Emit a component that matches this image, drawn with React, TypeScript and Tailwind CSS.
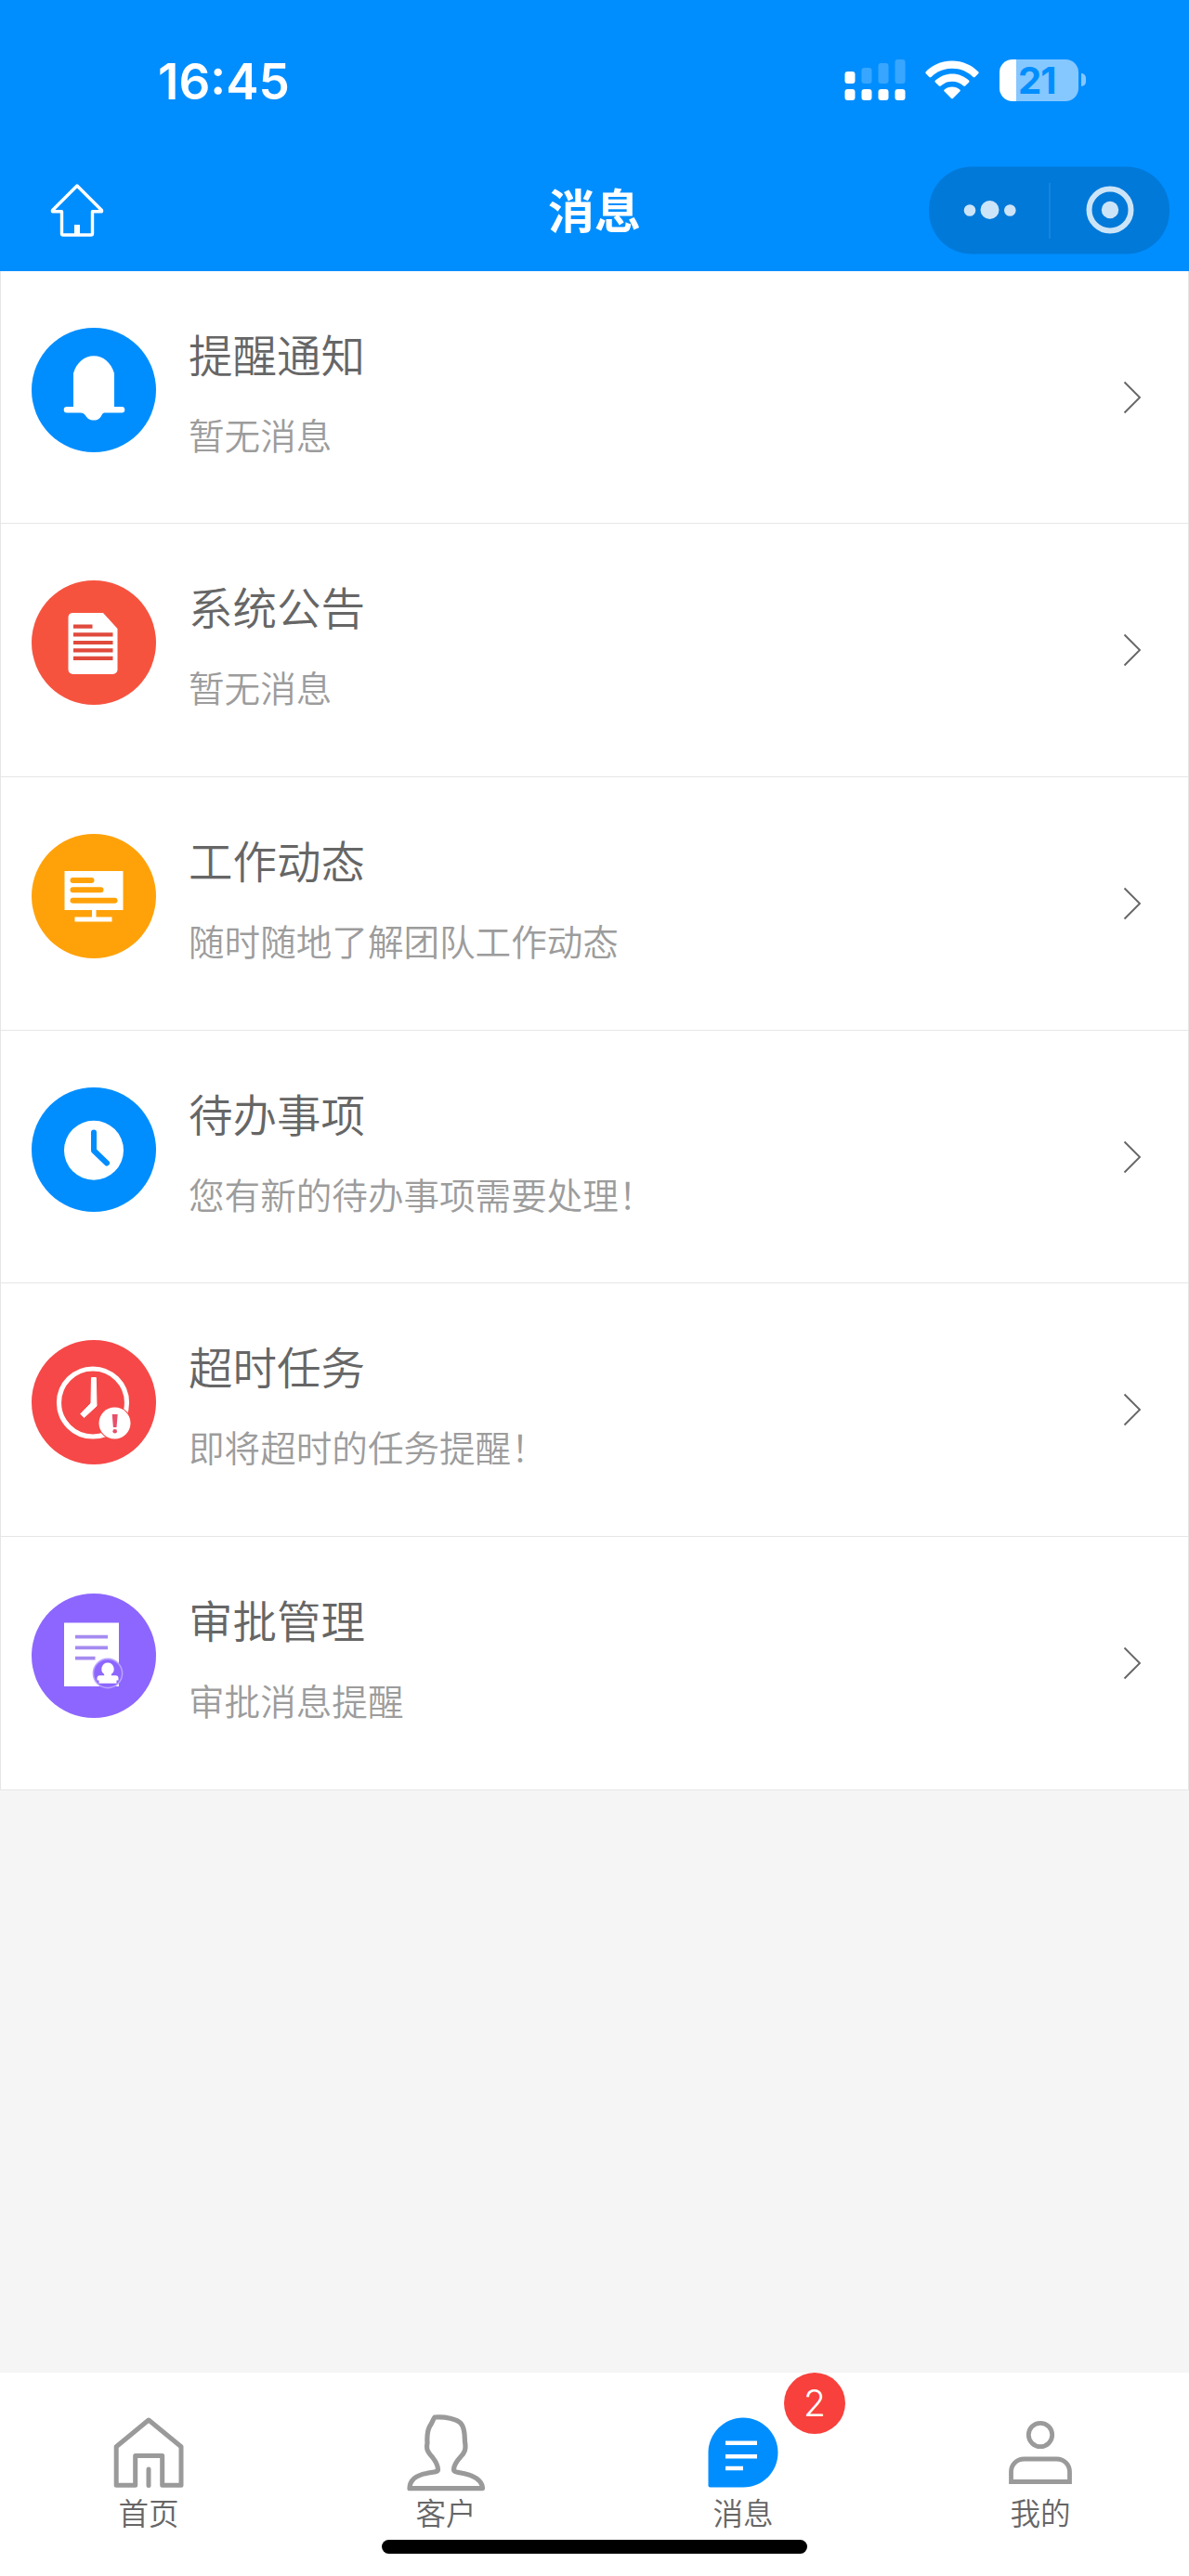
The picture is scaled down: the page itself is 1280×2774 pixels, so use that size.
import type { ReactNode } from 'react';

interface MessageItem {
    title: string;
    summary: string;
    icon: ReactNode;
}

interface TabItem {
    label: string;
    icon: ReactNode;
    badge?: number;
}

const messages: MessageItem[] = [
    { title: '提醒通知', summary: '暂无消息', icon: <BellIcon /> },
    { title: '系统公告', summary: '暂无消息', icon: <NoticeIcon /> },
    { title: '工作动态', summary: '随时随地了解团队工作动态', icon: <BoardIcon /> },
    { title: '待办事项', summary: '您有新的待办事项需要处理！', icon: <ClockIcon /> },
    { title: '超时任务', summary: '即将超时的任务提醒！', icon: <OvertimeIcon /> },
    { title: '审批管理', summary: '审批消息提醒', icon: <ApprovalIcon /> },
];

const tabs: TabItem[] = [
    { label: '首页', icon: <TabHomeIcon /> },
    { label: '客户', icon: <TabCustomerIcon /> },
    { label: '消息', icon: <TabMessageIcon />, badge: 2 },
    { label: '我的', icon: <TabMineIcon /> },
];

export default function App() {
    return (
        <div className="flex h-[2774px] w-[1280px] flex-col overflow-hidden bg-[#f5f5f5] font-['Noto_Sans_CJK_SC',sans-serif]">
            <header className="h-[291.6px] shrink-0 bg-[#008eff] text-white">
                <StatusBar />
                <NavBar />
            </header>
            <main className="flex-1">
                {messages.map((item) => (
                    <MessageRow key={item.title} item={item} />
                ))}
            </main>
            <TabBar />
        </div>
    );
}

function StatusBar() {
    return (
        <div className="flex h-[172px] items-center justify-between pr-[111px] pl-[170px]">
            <span className="pt-[3px] font-['Inter'] text-[53px] leading-[60px] font-semibold">16:45</span>
            <div className="flex items-center">
                <svg className="h-[46px] w-[66px]" viewBox="0 0 66 46" fill="#fff">
                    <rect x="0.5" y="14" width="11" height="13" rx="3" />
                    <rect x="18.5" y="10" width="11" height="17" rx="3" opacity="0.22" />
                    <rect x="36.5" y="5" width="11" height="22" rx="3" opacity="0.22" />
                    <rect x="54.5" y="1" width="11" height="26" rx="3" opacity="0.22" />
                    <rect x="0.5" y="33" width="11" height="12" rx="3" />
                    <rect x="18.5" y="33" width="11" height="12" rx="3" />
                    <rect x="36.5" y="33" width="11" height="12" rx="3" />
                    <rect x="54.5" y="33" width="11" height="12" rx="3" />
                </svg>
                <svg className="ml-[21px] h-[42px] w-[58px]" viewBox="0 0 58 42" fill="#fff">
                    <path d="M29 0.5C18 0.5 8 5 0.8 12.2c-.7.7-.7 1.4 0 2.1l3.6 3.6c.6.6 1.4.6 2 0C12.4 12 20.2 8.8 29 8.8s16.6 3.2 22.6 9.1c.6.6 1.4.6 2 0l3.6-3.6c.7-.7.7-1.4 0-2.1C50 5 40 .5 29 .5z" />
                    <path d="M29 14.5c-7 0-13.3 2.7-18 7.1-.7.7-.7 1.4 0 2.1l3.8 3.7c.6.6 1.3.6 2 .1C20 24.5 24.3 22.8 29 22.8s9 1.7 12.2 4.7c.7.5 1.4.5 2-.1l3.8-3.7c.7-.7.7-1.4 0-2.1-4.7-4.4-11-7.1-18-7.1z" />
                    <path d="M29 28.5c-3.2 0-6.1 1.1-8.3 3-.7.7-.7 1.3 0 2l7.2 7.2c.7.7 1.500.7 2.200 0l7.2-7.2c.7-.7.7-1.3 0-2-2.2-1.9-5.1-3-8.300-3z" />
                </svg>
                <div className="ml-[22px] flex items-center">
                    <div className="flex h-[45px] w-[85px] items-center rounded-[14px] bg-linear-to-r from-white from-[21.5%] to-[#85c7ff] to-[21.5%] pl-[20px]">
                        <span className="font-['Inter'] text-[40px] leading-[45px] font-bold tracking-[-1px] text-[#008eff]">21</span>
                    </div>
                    <div className="ml-[3px] h-[14px] w-[5px] rounded-r-full bg-[#85c7ff]" />
                </div>
            </div>
        </div>
    );
}

function NavBar() {
    return (
        <div className="grid h-[108px] grid-cols-[1fr_auto_1fr] items-center">
            <svg className="ml-[54px] h-[58px] w-[58px]" viewBox="0 0 58 58" fill="none" stroke="#fff" strokeWidth="3.4" strokeLinejoin="round">
                <path d="M29 3 2.5 29.500v1.300h10V54.500q0 1.500 1.500 1.500h30q1.500 0 1.500-1.500V30.800h10v-1.300z" />
                <path d="M29 45v10" strokeWidth="6" />
            </svg>
            <h1 className="pb-[5px] text-[50px] leading-[60px] font-bold">消息</h1>
            <svg className="mr-[21px] h-[95px] w-[259px] justify-self-end" viewBox="0 0 259 95">
                <rect width="259" height="94" y="0.5" rx="46" fill="#0079d9" />
                <path d="M130 18v60" stroke="#1f88dd" strokeWidth="1.5" />
                <g fill="#cce4f8">
                    <circle cx="44" cy="47.5" r="6.3" />
                    <circle cx="65.500" cy="47" r="10" />
                    <circle cx="87.300" cy="47.5" r="6.3" />
                    <circle cx="195" cy="47" r="9.2" />
                </g>
                <circle cx="195" cy="47" r="22.5" fill="none" stroke="#cce4f8" strokeWidth="6" />
            </svg>
        </div>
    );
}

function MessageRow({ item }: { item: MessageItem }) {
    return (
        <div className="flex h-[272.7px] items-start border border-t-0 border-[#e6e6e6] bg-white pr-[49px] pl-[33px]">
            <div className="mt-[61px] h-[134px] w-[134px] shrink-0">{item.icon}</div>
            <div className="mt-[57px] ml-[35px] flex-1">
                <h2 className="text-[47.5px] leading-[64px] font-[350] text-[#666]">{item.title}</h2>
                <p className="mt-[28px] text-[38.6px] leading-[52px] font-[350] text-[#9c9c9c]">{item.summary}</p>
            </div>
            <svg className="mt-[118px] h-[36px] w-[22px]" viewBox="0 0 22 36" fill="none" stroke="#666" strokeWidth="1.900">
                <path d="M2.500 1.500 19 18 2.500 34.500" />
            </svg>
        </div>
    );
}

function TabBar() {
    return (
        <nav className="h-[219.4px] shrink-0 bg-white">
            <div className="grid h-[180px] grid-cols-4">
                {tabs.map((tab) => (
                    <div key={tab.label} className="relative flex flex-col items-center pt-[40px]">
                        <div className="h-[90px] w-[92px]">{tab.icon}</div>
                        <span className="text-[32.6px] leading-[40px] font-[350] text-[#666]">{tab.label}</span>
                        {tab.badge && (
                            <span className="absolute top-0 left-[204px] flex h-[66px] w-[66px] items-center justify-center rounded-full bg-[#f8403c] font-['Inter'] text-[39px] leading-none font-light text-white">
                                {tab.badge}
                            </span>
                        )}
                    </div>
                ))}
            </div>
            {/* Home indicator */}
            <div className="mx-auto h-[15px] w-[458px] rounded-full bg-black" />
        </nav>
    );
}

function BellIcon() {
    return (
        <svg viewBox="0 0 134 134">
            <circle cx="67" cy="67" r="67" fill="#008eff" />
            <path
                fill="#fff"
                d="M67 30.300c-10 0-18.500 7-22 18.700v36h-7a3.300 3.300 0 0 0 0 6.600h14.500c2.500 0 4 .9 5.500 2.900 2 3 4.500 5 9 5s7-2 8.500-5.500c1-2 2-2.400 4-2.400H97a3.300 3.300 0 0 0 0-6.600h-8V49C85.500 37.300 77 30.300 67 30.300z"
            />
        </svg>
    );
}

function NoticeIcon() {
    return (
        <svg viewBox="0 0 134 134">
            <circle cx="67" cy="67" r="67" fill="#f6533f" />
            <path fill="#fff" d="M44 35h33l15.500 17v44a5 5 0 0 1-5 5H44.500a5 5 0 0 1-5-5V40a5 5 0 0 1 4.500-5z" />
            <path stroke="#e04a3c" strokeWidth="4.2" d="M45 49.700h20.500M45 58.300h42.500M45 67h42.500M45 75.400h42.500M45 83.800h42.500" />
        </svg>
    );
}

function BoardIcon() {
    return (
        <svg viewBox="0 0 134 134">
            <circle cx="67" cy="67" r="67" fill="#ffa20a" />
            <path fill="#fff" d="M35.500 40h63v42H69.500v7.500h17v5h-40v-5H65V82H35.500z" />
            <path stroke="#ffa20a" strokeWidth="6" strokeLinecap="round" d="M44.500 50h20M44.500 60.300h30M44.500 71.800h45" />
        </svg>
    );
}

function ClockIcon() {
    return (
        <svg viewBox="0 0 134 134">
            <circle cx="67" cy="67" r="67" fill="#008eff" />
            <circle cx="67" cy="67.7" r="32" fill="#fff" />
            <path fill="none" stroke="#008eff" strokeWidth="6" strokeLinecap="round" strokeLinejoin="round" d="M67 48.500v19.500l14 13.500" />
        </svg>
    );
}

function OvertimeIcon() {
    return (
        <svg viewBox="0 0 134 134">
            <circle cx="67" cy="67" r="67" fill="#f64848" />
            <circle cx="66" cy="67.5" r="36.500" fill="none" stroke="#fff" strokeWidth="5.200" />
            <path fill="#fff" stroke="#fff" strokeWidth="1" strokeLinejoin="round" d="M64.500 40.500h4.800l.7 30.500-13.500 12.500-3.800-3.800L64 68z" />
            <circle cx="89.5" cy="89.5" r="18" fill="#f64848" />
            <circle cx="89.5" cy="89.5" r="17" fill="#fff" />
            <path fill="#e8506a" d="M86.700 80h6l-1.200 14h-3.600z" />
            <circle cx="89.7" cy="98.3" r="2.3" fill="#e8506a" />
        </svg>
    );
}

function ApprovalIcon() {
    return (
        <svg viewBox="0 0 134 134">
            <circle cx="67" cy="67" r="67" fill="#8d66ff" />
            <path fill="#fff" d="M35 31.500h59v68.500H35z" />
            <path stroke="#a58af0" strokeWidth="3.8" d="M47 46.700h35M47 58.300h35M47 69.700h21.500" />
            <circle cx="82" cy="86" r="15.6" fill="#8d66ff" stroke="#b9a2ff" strokeWidth="1.6" />
            <path
                fill="#fff"
                d="M82 74.500a6.800 6.800 0 0 0-4 12.200l.3 1.600h-4.800a3 3 0 0 0-3 3v2.200h2v3.300h19v-3.300h2v-2.200a3 3 0 0 0-3-3h-4.800l.3-1.600a6.800 6.800 0 0 0-4-12.200z"
            />
        </svg>
    );
}

function TabHomeIcon() {
    return (
        <svg className="h-[92px] w-[92px]" viewBox="0 0 92 92" fill="none" stroke="#9a9a9a" strokeWidth="5" strokeLinejoin="round" strokeLinecap="round">
            <path d="M46 11 11.200 39.700v41.500h20.500V49.500h29v31.700h20.300V39.700z" />
            <path d="M46 64v17.500" />
        </svg>
    );
}

function TabCustomerIcon() {
    return (
        <svg className="h-[92px] w-[92px]" viewBox="0 0 92 92" fill="none" stroke="#9a9a9a" strokeWidth="5.2" strokeLinejoin="round">
            <path d="M34 8C45 7 58 10 62 14.500 67 20 66 29 66.500 34.500 68 43 66 46.500 62 50.500 57 56 54.500 60 54.500 64.500 54.500 67 59 67.500 65 68.500 77 71 85 76 85.500 84.700H7C7 76 14 70.500 25 68.500 32 67 37.500 67 37.500 64.500 37.500 59 35 55.500 31.500 51 27 46 24.500 43 26 36 25.500 28 26 23 28.500 18 31 15 31.500 11.500 34 8z" />
        </svg>
    );
}

function TabMessageIcon() {
    return (
        <svg className="h-[92px] w-[92px]" viewBox="0 0 92 92">
            <path fill="#008eff" d="M46 8.500c20.500 0 37.500 17 37.500 37.500S67.500 83.500 46 83.500H10.500a2 2 0 0 1-2-2V46C8.500 25.500 25.500 8.500 46 8.500z" />
            <path stroke="#fff" strokeWidth="4.6" d="M27 35.700h34M27 50.300h34M27 63h19" />
        </svg>
    );
}

function TabMineIcon() {
    return (
        <svg className="h-[92px] w-[92px]" viewBox="0 0 92 92" fill="none" stroke="#9a9a9a" strokeWidth="4.8">
            <circle cx="46" cy="27" r="12.7" />
            <path d="M14.500 77.500V67c0-8 6-14 14-14h35c8 0 14 6 14 14v10.500z" />
        </svg>
    );
}
